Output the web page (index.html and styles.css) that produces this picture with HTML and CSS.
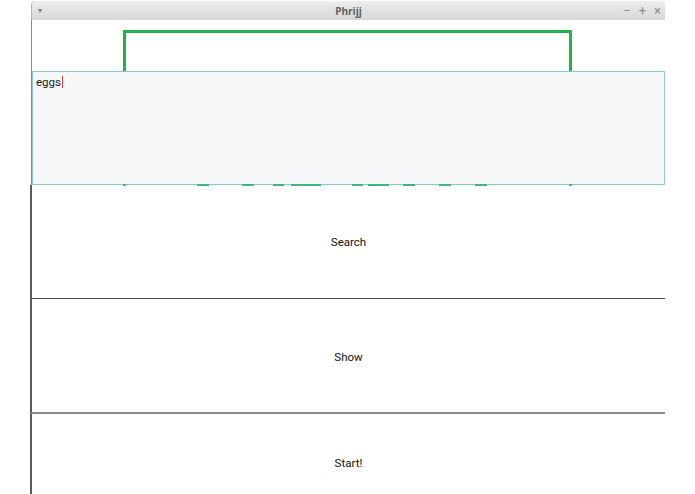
FILE: index.html
```html
<!DOCTYPE html>
<html>
<head>
<meta charset="utf-8">
<link rel="stylesheet" href="styles.css">
</head>
<body>
<div class="window">
  <div class="titlebar">
    <span class="menu">▾</span>
    <span class="title">Phrijj</span>
    <span class="controls"><span>−</span><span>+</span><span>×</span></span>
  </div>
  <div class="content">
    <div class="canvas">
      <div class="greenbox"></div>
      <div class="entry">eggs<span class="caret"></span></div>
      <svg class="dashes" width="633" height="2" viewBox="32 0 633 2">
        <rect x="123" y="0" width="3" height="2"/>
        <rect x="197" y="0" width="12" height="2"/>
        <rect x="242" y="0" width="12" height="2"/>
        <rect x="273" y="0" width="11" height="2"/>
        <rect x="291" y="0" width="30" height="2"/>
        <rect x="352" y="0" width="11" height="2"/>
        <rect x="368" y="0" width="21" height="2"/>
        <rect x="403" y="0" width="12" height="2"/>
        <rect x="439" y="0" width="12" height="2"/>
        <rect x="475" y="0" width="12" height="2"/>
        <rect x="569" y="0" width="3" height="2"/>
      </svg>
    </div>
    <div class="btn btn-search">Search</div>
    <div class="btn btn-show">Show</div>
    <div class="btn btn-start">Start!</div>
  </div>
</div>
</body>
</html>
```
FILE: styles.css
```css
html, body {
  margin: 0;
  padding: 0;
  background: #ffffff;
  overflow: hidden;
}
body {
  font-family: Roboto, "Liberation Sans", sans-serif;
  height: 494px;
}
.window {
  margin-left: 31px;
  width: 634px;
}
.titlebar {
  height: 19px;
  margin-top: 1px;
  background: linear-gradient(#eeeeee, #d6d6d6);
  border-radius: 4px 4px 0 0;
  border-left: 1px solid #b8b8b8;
  display: flex;
  align-items: center;
  position: relative;
}
.menu {
  font-size: 8px;
  margin-left: 6px;
  color: #7a7a7a;
}
.title {
  position: absolute;
  left: 0;
  right: 0;
  text-align: center;
  font-family: "Open Sans", "DejaVu Sans", sans-serif;
  font-weight: 700;
  font-size: 10px;
  color: #606060;
}
.controls {
  margin-left: auto;
  margin-right: 4px;
  display: flex;
  gap: 8px;
  font-size: 13px;
  line-height: 13px;
  color: #8c8c8c;
}
.content {
  background: #ffffff;
}
.canvas {
  position: relative;
  height: 165px;
  border-left: 1px solid #8a8a8a;
}
.greenbox {
  position: absolute;
  left: 91px;
  top: 10px;
  width: 443px;
  height: 150px;
  border: 3px solid #22b14c;
  border-bottom: none;
}
.dashes {
  position: absolute;
  left: 0;
  top: 164px;
  fill: #3db87a;
}
.entry {
  position: absolute;
  left: 0;
  top: 51px;
  width: 633px;
  height: 114px;
  box-sizing: border-box;
  border: 1px solid #92c3d2;
  background: #f7f8f9;
  font-size: 11.5px;
  color: #222;
  padding: 4px 0 0 3px;
  line-height: 13px;
}
.caret {
  display: inline-block;
  width: 1px;
  height: 12px;
  background: #e0383e;
  vertical-align: -2px;
  margin-left: 1px;
}
.btn {
  height: 114px;
  display: flex;
  align-items: center;
  justify-content: center;
  font-size: 11.5px;
  color: #111;
  border-left: 2px solid #5a5a5a;
  box-sizing: border-box;
  margin-left: -1px;
}
.btn-search {
  border-bottom: 1px solid #4a4a4a;
  height: 114px;
  padding-top: 1px;
}
.btn-show {
  border-bottom: 2px solid #8a8a8a;
  height: 115px;
  padding-top: 2px;
}
.btn-start {
  height: 100px;
  align-items: flex-start;
  padding-top: 42px;
}
```
